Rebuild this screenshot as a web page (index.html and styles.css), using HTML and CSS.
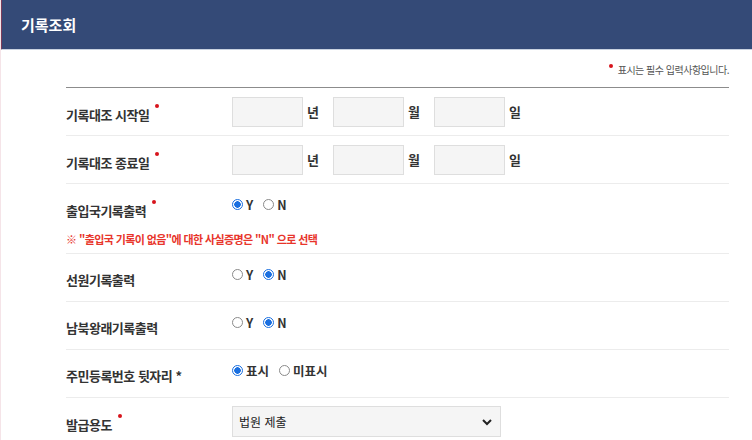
FILE: index.html
```html
<!DOCTYPE html>
<html lang="ko">
<head>
    <meta charset="UTF-8">
    <meta name="viewport" content="width=device-width, initial-scale=1.0">
    <title>기록조회</title>
    <link rel="stylesheet" href="styles.css">
</head>
<body>

    <div class="header">
        <h2>기록조회</h2>
    </div>

    <div class="container">
        <p class="notice"><span class="dot"></span> 표시는 필수 입력사항입니다.</p>

        <div class="form">
            <div class="row">
                <div class="label">기록대조 시작일<span class="dot"></span></div>
                <div class="field">
                    <input type="text" class="date-input"><span class="unit">년</span>
                    <input type="text" class="date-input"><span class="unit">월</span>
                    <input type="text" class="date-input"><span class="unit">일</span>
                </div>
            </div>

            <div class="row">
                <div class="label">기록대조 종료일<span class="dot"></span></div>
                <div class="field">
                    <input type="text" class="date-input"><span class="unit">년</span>
                    <input type="text" class="date-input"><span class="unit">월</span>
                    <input type="text" class="date-input"><span class="unit">일</span>
                </div>
            </div>

            <div class="row row-note">
                <div class="row-inner">
                    <div class="label">출입국기록출력<span class="dot"></span></div>
                    <div class="field radios">
                        <label><input type="radio" name="imm" checked>Y</label>
                        <label><input type="radio" name="imm">N</label>
                    </div>
                </div>
                <p class="warn">※ "출입국 기록이 없음"에 대한 사실증명은 "N" 으로 선택</p>
            </div>

            <div class="row">
                <div class="label">선원기록출력</div>
                <div class="field radios">
                    <label><input type="radio" name="sea">Y</label>
                    <label><input type="radio" name="sea" checked>N</label>
                </div>
            </div>

            <div class="row">
                <div class="label">남북왕래기록출력</div>
                <div class="field radios">
                    <label><input type="radio" name="nk">Y</label>
                    <label><input type="radio" name="nk" checked>N</label>
                </div>
            </div>

            <div class="row">
                <div class="label">주민등록번호 뒷자리 *</div>
                <div class="field radios">
                    <label><input type="radio" name="rrn" checked>표시</label>
                    <label><input type="radio" name="rrn">미표시</label>
                </div>
            </div>

            <div class="row last">
                <div class="label">발급용도<span class="dot"></span></div>
                <div class="field">
                    <div class="select">
                        <span>법원 제출</span>
                        <svg width="10" height="8" viewBox="0 0 10 8"><path d="M1 2 L5 6 L9 2" fill="none" stroke="#222" stroke-width="2"/></svg>
                    </div>
                </div>
            </div>
        </div>
    </div>

</body>
</html>
```

FILE: styles.css
```css
body {
    margin: 0;
    font-family: "Noto Sans CJK KR", "Noto Sans", sans-serif;
    background: white;
    color: #333;
    border-left: 1px solid #f5e4e8;
    min-height: 440px;
    box-sizing: border-box;
}
.header {
    height: 50px;
    background-color: #344a77;
    border-left: 2px solid #7a3c5a;
    margin-left: -1px;
    display: flex;
    align-items: center;
    padding-left: 19px;
    border-bottom: 1px solid #c9d2e0;
    box-sizing: border-box;
}
.header h2 {
    margin: 0;
    color: white;
    font-size: 15px;
    font-weight: bold;
}
.container {
    padding: 0 23px 0 65px;
}
.notice {
    margin: 0;
    height: 37px;
    text-align: right;
    font-size: 10px;
    color: #555;
    line-height: 39px;
    letter-spacing: -0.5px;
}
.notice .dot {
    vertical-align: 6px;
    margin-right: 2px;
}
.dot {
    display: inline-block;
    width: 4px;
    height: 4px;
    border-radius: 50%;
    background-color: #d7141c;
    vertical-align: 12px;
    margin-left: 6px;
}
.form {
    border-top: 1px solid #8c8c8c;
}
.row {
    display: flex;
    align-items: center;
    height: 47px;
    border-bottom: 1px solid #ececec;
}
.row-note {
    display: block;
    height: 69px;
}
.row-inner {
    display: flex;
    align-items: center;
    height: 47px;
}
.label {
    width: 166px;
    font-size: 13px;
    font-weight: bold;
    color: #333;
    letter-spacing: -0.5px;
    padding-top: 4px;
}
.field {
    display: flex;
    align-items: center;
}
.date-input {
    width: 71px;
    height: 30px;
    box-sizing: border-box;
    border: 1px solid #dedede;
    background-color: #f5f5f5;
    margin: 0;
}
.unit {
    width: 30px;
    padding-left: 4px;
    box-sizing: border-box;
    font-size: 13px;
    font-weight: bold;
    color: #333;
}
.radios {
    margin-bottom: 6px;
}
.radios label {
    display: flex;
    align-items: center;
    font-size: 12.5px;
    font-weight: bold;
    color: #333;
    margin-right: 10px;
}
.radios input {
    appearance: none;
    width: 11px;
    height: 11px;
    margin: 0 3px 0 0;
    border: 1px solid #8a8a8a;
    border-radius: 50%;
    box-sizing: border-box;
    background: white;
}
.radios input:checked {
    border: 1px solid #1a6fe0;
    background: radial-gradient(circle, #1a6fe0 0 3px, white 3.5px);
}
.warn {
    margin: 0;
    font-size: 11px;
    font-weight: bold;
    color: #e8352b;
    letter-spacing: -0.6px;
}
.last {
    border-bottom: none;
}
.select {
    width: 269px;
    height: 31px;
    box-sizing: border-box;
    border: 1px solid #dedede;
    background-color: #f5f5f5;
    display: flex;
    align-items: center;
    justify-content: space-between;
    padding: 0 8px 0 6px;
    font-size: 12px;
    color: #222;
}
```
